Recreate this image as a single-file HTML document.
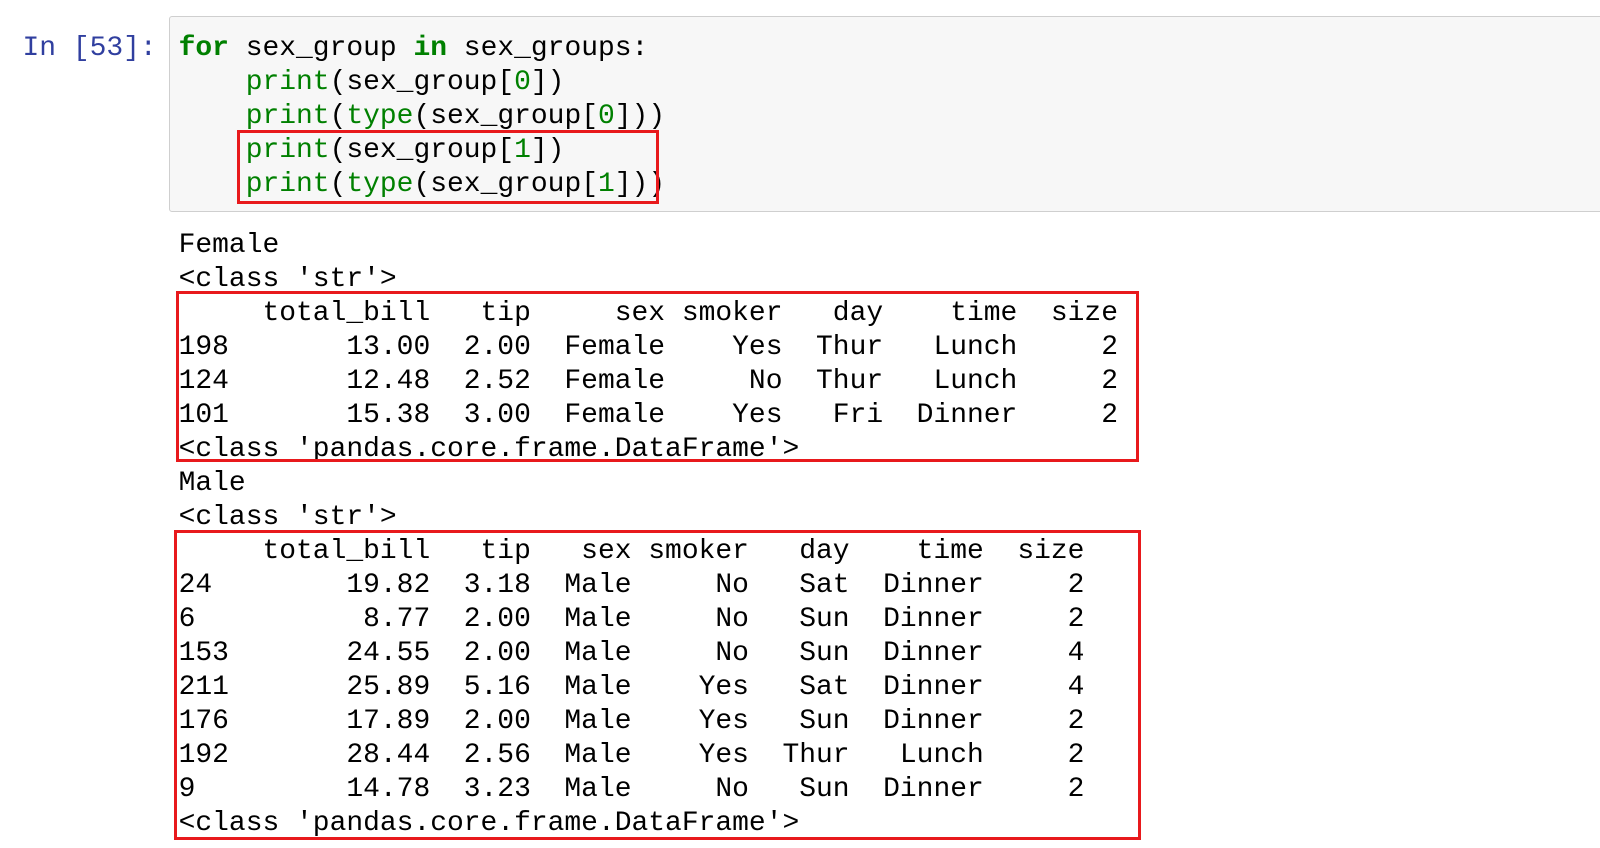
<!DOCTYPE html>
<html><head><meta charset="utf-8"><style>
body{margin:0;background:#fff;width:1600px;height:848px;overflow:hidden;position:relative;font-family:"Liberation Mono",monospace;}
pre{margin:0;font-family:"Liberation Mono",monospace;font-size:27.96px;line-height:34.01px;position:absolute;color:#000;white-space:pre;}
.prompt{position:absolute;left:22.5px;top:31.5px;font-size:27.96px;line-height:34.01px;color:#303F9F;white-space:pre;}
.cell{position:absolute;left:169.4px;top:16.3px;width:1440px;height:194px;background:#f7f7f7;border:1px solid #cfcfcf;border-radius:3px;}
.k{color:#008000;font-weight:bold}.b{color:#008000}
.box{position:absolute;border:3px solid #e8191c;box-sizing:border-box;}
</style></head><body>
<div class="prompt">In [53]:</div>
<div class="cell"></div>
<pre style="left:178.6px;top:31.5px"><span class="k">for</span> sex_group <span class="k">in</span> sex_groups:
    <span class="b">print</span>(sex_group[<span class="b">0</span>])
    <span class="b">print</span>(<span class="b">type</span>(sex_group[<span class="b">0</span>]))
    <span class="b">print</span>(sex_group[<span class="b">1</span>])
    <span class="b">print</span>(<span class="b">type</span>(sex_group[<span class="b">1</span>]))</pre>
<pre style="left:178.6px;top:229px">Female
&lt;class 'str'&gt;
     total_bill   tip     sex smoker   day    time  size
198       13.00  2.00  Female    Yes  Thur   Lunch     2
124       12.48  2.52  Female     No  Thur   Lunch     2
101       15.38  3.00  Female    Yes   Fri  Dinner     2
&lt;class 'pandas.core.frame.DataFrame'&gt;
Male
&lt;class 'str'&gt;
     total_bill   tip   sex smoker   day    time  size
24        19.82  3.18  Male     No   Sat  Dinner     2
6          8.77  2.00  Male     No   Sun  Dinner     2
153       24.55  2.00  Male     No   Sun  Dinner     4
211       25.89  5.16  Male    Yes   Sat  Dinner     4
176       17.89  2.00  Male    Yes   Sun  Dinner     2
192       28.44  2.56  Male    Yes  Thur   Lunch     2
9         14.78  3.23  Male     No   Sun  Dinner     2
&lt;class 'pandas.core.frame.DataFrame'&gt;</pre>
<div class="box" style="left:236.7px;top:129.6px;width:422.5px;height:74.5px"></div>
<div class="box" style="left:175.5px;top:290.8px;width:963px;height:171.4px"></div>
<div class="box" style="left:173.5px;top:529.6px;width:967px;height:310px"></div>
</body></html>
